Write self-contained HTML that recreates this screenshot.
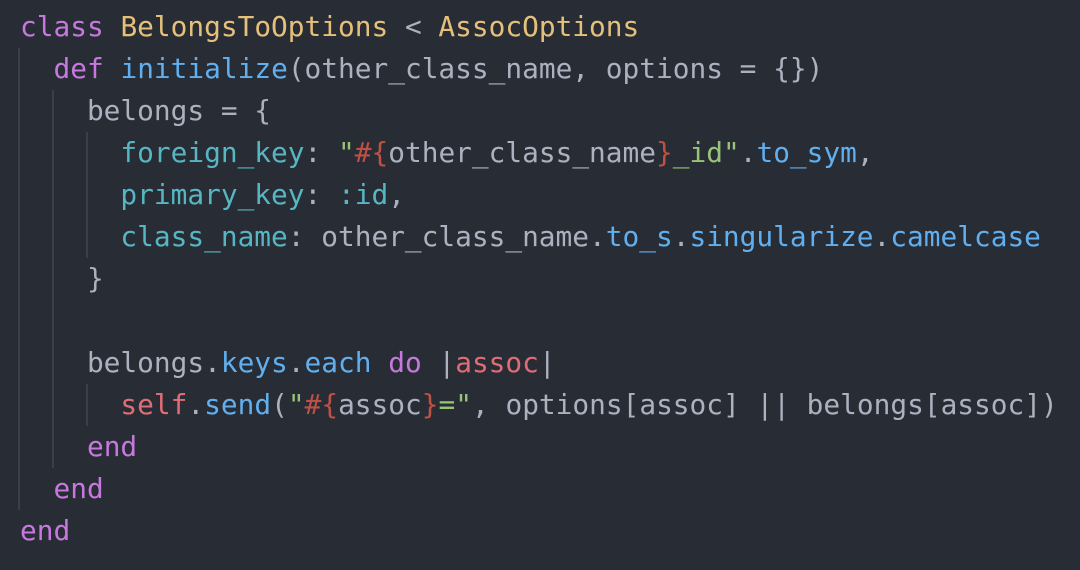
<!DOCTYPE html>
<html><head><style>
html,body{margin:0;padding:0;background:#282c34;width:1080px;height:570px;overflow:hidden}
pre{margin:0;position:absolute;left:20px;top:6px;font-family:"DejaVu Sans Mono","Liberation Mono",monospace;font-size:27.8px;line-height:42px;color:#abb2bf;white-space:pre}
.k{color:#c678dd}.y{color:#e5c07b}.b{color:#61afef}.c{color:#56b6c2}.g{color:#98c379}.r{color:#e06c75}.d{color:#be5046}
.gd{position:absolute;width:2px;background:#3b4048}
</style></head><body>
<div class="gd" style="left:18px;top:48px;height:462px"></div>
<div class="gd" style="left:52px;top:90px;height:378px"></div>
<div class="gd" style="left:86px;top:132px;height:126px"></div>
<div class="gd" style="left:86px;top:384px;height:42px"></div>
<pre><span class="k">class</span> <span class="y">BelongsToOptions</span> &lt; <span class="y">AssocOptions</span>
  <span class="k">def</span> <span class="b">initialize</span>(other_class_name, options = {})
    belongs = {
      <span class="c">foreign_key</span>: <span class="g">"</span><span class="d">#{</span>other_class_name<span class="d">}</span><span class="g">_id"</span>.<span class="b">to_sym</span>,
      <span class="c">primary_key</span>: <span class="c">:id</span>,
      <span class="c">class_name</span>: other_class_name.<span class="b">to_s</span>.<span class="b">singularize</span>.<span class="b">camelcase</span>
    }

    belongs.<span class="b">keys</span>.<span class="b">each</span> <span class="k">do</span> |<span class="r">assoc</span>|
      <span class="r">self</span>.<span class="b">send</span>(<span class="g">"</span><span class="d">#{</span>assoc<span class="d">}</span><span class="g">="</span>, options[assoc] || belongs[assoc])
    <span class="k">end</span>
  <span class="k">end</span>
<span class="k">end</span></pre>
</body></html>
